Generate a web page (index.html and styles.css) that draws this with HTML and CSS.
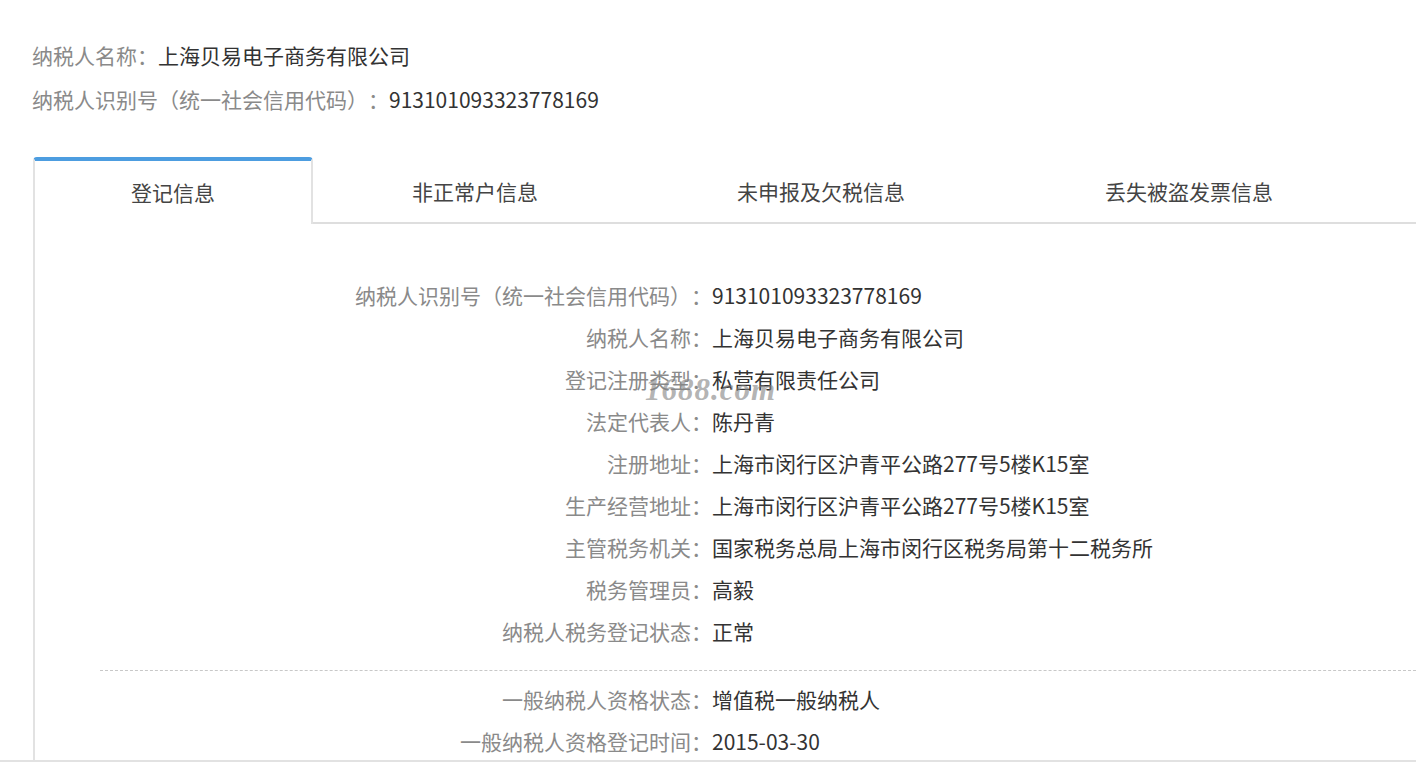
FILE: index.html
```html
<!DOCTYPE html>
<html lang="zh-CN">
<head>
<meta charset="UTF-8">
<meta name="viewport" content="width=device-width, initial-scale=1.0">
<title>纳税人信息</title>
<link rel="stylesheet" href="styles.css">
</head>
<body>

<div class="summary">
    <div class="summary-row"><span class="summary-label">纳税人名称：</span><span class="summary-value">上海贝易电子商务有限公司</span></div>
    <div class="summary-row"><span class="summary-label">纳税人识别号（统一社会信用代码）：</span><span class="summary-value">913101093323778169</span></div>
</div>

<div class="tabs">
    <div class="tab active">登记信息</div>
    <div class="tab tab-2">非正常户信息</div>
    <div class="tab tab-3">未申报及欠税信息</div>
    <div class="tab tab-4">丢失被盗发票信息</div>
    <div class="tab tab-rest"></div>
</div>

<div class="panel">
    <div class="info-list">
        <div class="info-row"><span class="info-label">纳税人识别号（统一社会信用代码）：</span><span class="info-value">913101093323778169</span></div>
        <div class="info-row"><span class="info-label">纳税人名称：</span><span class="info-value">上海贝易电子商务有限公司</span></div>
        <div class="info-row"><span class="info-label">登记注册类型：</span><span class="info-value">私营有限责任公司</span></div>
        <div class="info-row"><span class="info-label">法定代表人：</span><span class="info-value">陈丹青</span></div>
        <div class="info-row"><span class="info-label">注册地址：</span><span class="info-value">上海市闵行区沪青平公路277号5楼K15室</span></div>
        <div class="info-row"><span class="info-label">生产经营地址：</span><span class="info-value">上海市闵行区沪青平公路277号5楼K15室</span></div>
        <div class="info-row"><span class="info-label">主管税务机关：</span><span class="info-value">国家税务总局上海市闵行区税务局第十二税务所</span></div>
        <div class="info-row"><span class="info-label">税务管理员：</span><span class="info-value">高毅</span></div>
        <div class="info-row"><span class="info-label">纳税人税务登记状态：</span><span class="info-value">正常</span></div>
    </div>

    <div class="divider"></div>

    <div class="info-list">
        <div class="info-row"><span class="info-label">一般纳税人资格状态：</span><span class="info-value">增值税一般纳税人</span></div>
        <div class="info-row"><span class="info-label">一般纳税人资格登记时间：</span><span class="info-value">2015-03-30</span></div>
    </div>

    <div class="watermark">1688.com</div>
</div>

<div class="footer-line"></div>

</body>
</html>
```

FILE: styles.css
```css
body {
    margin: 0;
    background: #fff;
    font-family: "Noto Sans CJK SC", "Microsoft YaHei", sans-serif;
    color: #333;
    text-spacing-trim: space-all;
}

/* Top summary */
.summary {
    padding: 33px 0 0 32px;
}

.summary-row {
    line-height: 44px;
    font-size: 21px;
    white-space: nowrap;
}

.summary-label {
    color: #8a8a8a;
}

.summary-value {
    color: #333;
}

/* Tabs */
.tabs {
    display: flex;
    align-items: flex-end;
    margin: 36px 0 0 33px;
    height: 67px;
}

.tab {
    box-sizing: border-box;
    height: 64px;
    line-height: 62px;
    text-align: center;
    font-size: 21px;
    color: #444;
    border-bottom: 2px solid #dedede;
}

.tab.active {
    width: 280px;
    height: 67px;
    line-height: 62px;
    border: 2px solid #e2e2e2;
    border-top: 4px solid #4d9de0;
    border-bottom: none;
    border-radius: 4px 4px 0 0;
}

.tab-2 { width: 324px; }
.tab-3 { width: 368px; }
.tab-4 { width: 368px; }
.tab-rest { flex: 1; }

/* Panel */
.panel {
    position: relative;
    margin-left: 33px;
    height: 536px;
    overflow: hidden;
    border-left: 2px solid #e2e2e2;
    padding-top: 50px;
    box-sizing: border-box;
}

.info-row {
    display: flex;
    line-height: 42px;
    white-space: nowrap;
}

.info-label {
    width: 677px;
    flex: none;
    text-align: right;
    font-size: 21px;
    color: #8a8a8a;
}

.info-value {
    font-size: 21px;
    color: #333;
}

.divider {
    margin: 18px 0 7px 65px;
    border-top: 1px dashed #c8c8c8;
}

/* Image watermark of the screenshot source */
.watermark {
    position: absolute;
    left: 610px;
    top: 150px;
    font-family: "Liberation Serif", serif;
    font-style: italic;
    font-weight: bold;
    font-size: 31px;
    line-height: 32px;
    color: rgba(130, 130, 130, 0.6);
    letter-spacing: 1px;
}

.footer-line {
    border-top: 2px solid #e2e2e2;
}
```
